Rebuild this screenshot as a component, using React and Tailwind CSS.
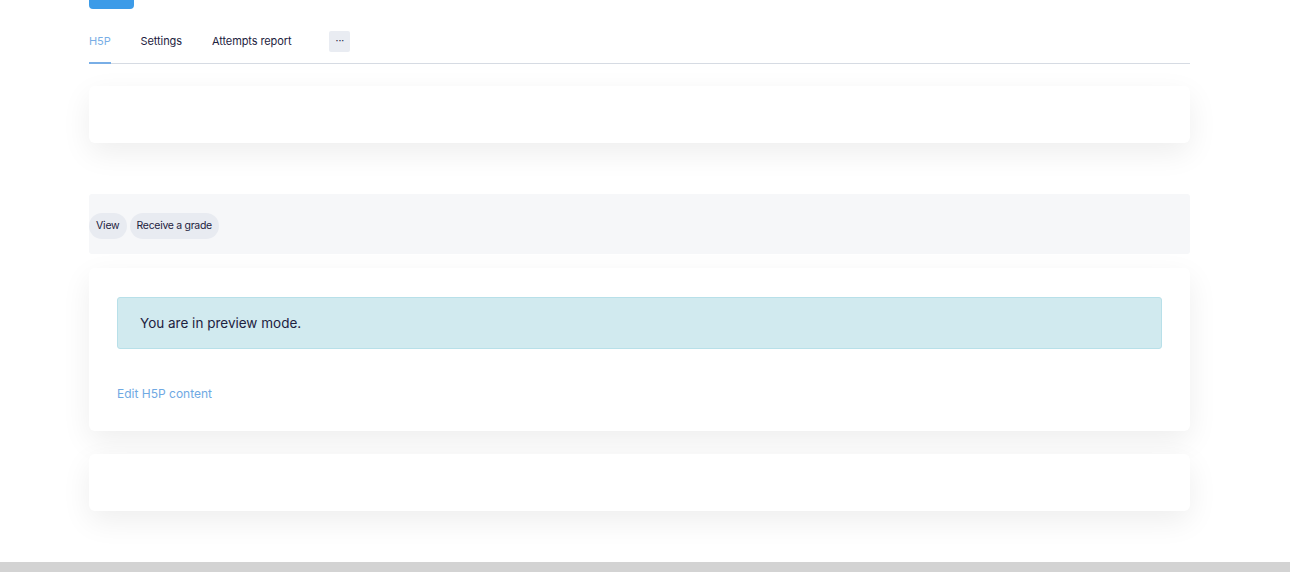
import React from 'react';

const cardShadow = 'shadow-[0_10px_30px_rgba(0,0,0,0.07)]';

const App = () => {
  const tabs = [
    { name: 'H5P', active: true },
    { name: 'Settings' },
    { name: 'Attempts report' },
  ];

  return (
    <div className="min-h-[572px] bg-white flex flex-col font-['Inter',sans-serif] text-[#1d2240]">
      <div className="flex-1 w-[1101px] ml-[89px]">
        {/* Top button */}
        <div className="w-[45px] h-[9px] bg-[#3c9be8] rounded-b-[4px]" />

        {/* Tabs */}
        <div className="mt-[14px] flex items-end border-b border-[#d6dbe3] h-[41px]">
          {tabs.map((tab) => (
            <div
              key={tab.name}
              className={`h-full flex items-center mr-[30px] pb-[3px] text-[11px] tracking-[-0.1px] -mb-px border-b-2 ${
                tab.active ? 'text-[#79aee6] border-[#79aee6]' : 'text-[#1d2240] border-transparent'
              }`}
            >
              {tab.name}
            </div>
          ))}
          <div className="h-full flex items-center ml-[8px] pb-[3px]">
            <div className="w-[21px] h-[21px] bg-[#e9ecf2] rounded-[2px] flex items-center justify-center text-[10px] leading-none pb-[3px]">
              ···
            </div>
          </div>
        </div>

        {/* Card 1 */}
        <div className={`mt-[22px] h-[57px] bg-white rounded-[6px] ${cardShadow}`} />

        {/* Activity info band */}
        <div className="mt-[51px] h-[60px] bg-[#f6f7f9] rounded-[3px] flex items-center gap-[3px] pt-[4px]">
          <span className="h-[26px] px-[7px] flex items-center rounded-full bg-[#e8ebf1] text-[10.5px] tracking-[-0.2px]">View</span>
          <span className="h-[26px] px-[7px] flex items-center rounded-full bg-[#e8ebf1] text-[10.5px] tracking-[-0.3px]">Receive a grade</span>
        </div>

        {/* Main card */}
        <div className={`mt-[14px] bg-white rounded-[6px] px-[28px] pt-[29px] pb-[28px] ${cardShadow}`}>
          <div className="h-[52px] bg-[#d1eaef] border border-[#b8e0e9] rounded-[3px] flex items-center pl-[22px] text-[13.5px] text-[#1d2240]">
            You are in preview mode.
          </div>
          <div className="mt-[36px] text-[12px] text-[#6fa9e3]">Edit H5P content</div>
        </div>

        {/* Card 3 */}
        <div className={`mt-[23px] h-[57px] bg-white rounded-[6px] ${cardShadow}`} />
      </div>

      <div className="h-[10px] bg-[#d3d3d3]" />
    </div>
  );
};

export default App;
